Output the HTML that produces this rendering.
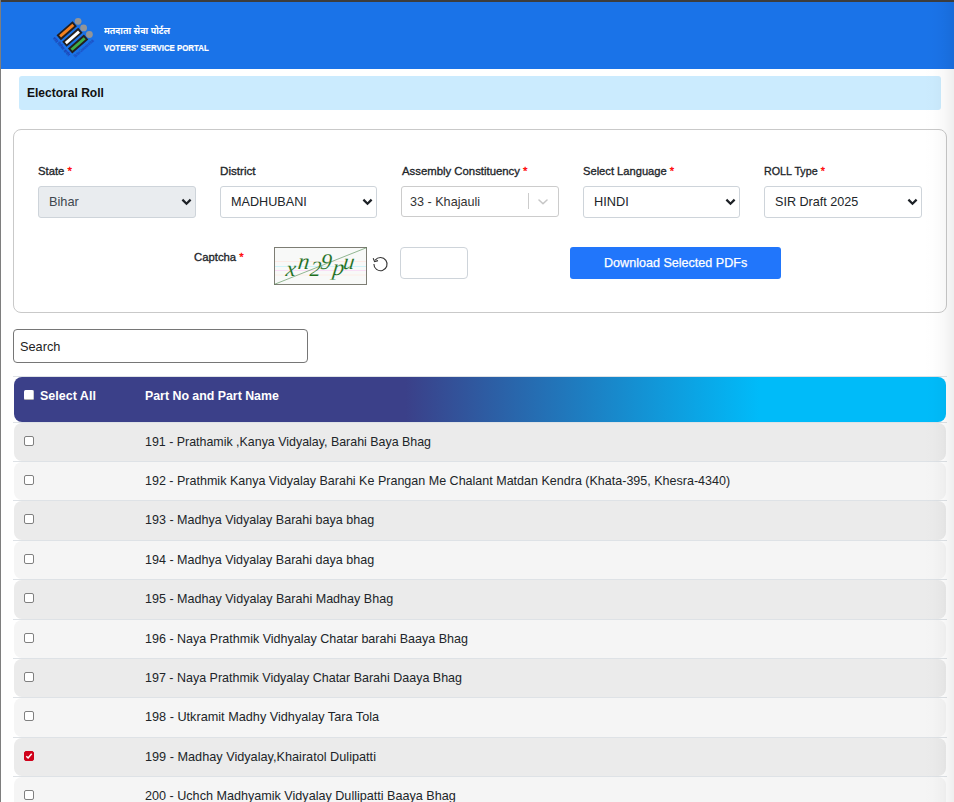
<!DOCTYPE html>
<html lang="en">
<head>
<meta charset="utf-8">
<title>Voters' Service Portal - Electoral Roll</title>
<style>
*{box-sizing:border-box;margin:0;padding:0}
html,body{width:954px;height:802px;overflow:hidden;background:#fff}
body{position:relative;font-family:"Liberation Sans","Noto Sans CJK SC",sans-serif;font-size:13px;color:#212529}
.abs{position:absolute}
.t{position:absolute;white-space:nowrap}
#topbar{left:0;top:0;width:954px;height:2px;background:#3c3c3c}
#leftedge{left:0;top:0;width:1px;height:802px;background:#7e7e7e;z-index:20}
#hdr{left:1px;top:2px;width:953px;height:67px;background:#1a73e8}
#hin{color:#fff;font-weight:700;font-size:9.5px;line-height:14px;font-family:"Liberation Sans","Noto Sans Devanagari","Noto Sans CJK SC",sans-serif}
#eng{color:#fff;font-weight:700;font-size:9px;line-height:14px;-webkit-text-stroke:0.2px #fff}
#banner{left:19px;top:76px;width:922px;height:34px;background:#cbebfe;border-radius:3px}
#ban{font-size:13.2px;line-height:18px;font-weight:700;color:#111}
#card{left:13px;top:129px;width:934px;height:184px;border:1px solid #c9c9c9;border-radius:8px;background:#fff}
.lbl{font-size:11.5px;line-height:14px;font-weight:400;color:#212529;-webkit-text-stroke:0.32px #212529}
.lbl b{color:#f00;font-weight:400;-webkit-text-stroke:0.32px #f00}
.sel{position:absolute;top:186px;height:32px;border:1px solid #ced4da;border-radius:3px;background:#fff}
.sel svg{position:absolute;right:2.6px;top:11px}
.st{font-size:13px;line-height:16px;color:#212529}
.row{position:absolute;left:13px;width:934px;height:39.2px;border-top:1px solid #dee2e6}
.row i{position:absolute;left:1px;top:0;right:1px;bottom:0;border-radius:8px;display:block}
.row.o i{background:#ebebeb}
.row.e i{background:#f5f5f5}
.row u{position:absolute;left:11px;top:13px;width:10px;height:10px;border:1px solid #808080;border-radius:2px;background:#fff;display:block;text-decoration:none}
.row u.on{background:#d0021b;border-color:#d0021b}
.rt{font-size:13px;line-height:16px;color:#212529}
.hs{font-size:13px;line-height:16px;font-weight:700;color:#fff}
</style>
</head>
<body>
<div class="abs" id="topbar"></div>
<div class="abs" id="leftedge"></div>
<div class="abs" id="hdr"></div>
<svg class="abs" style="left:45px;top:10px" width="60" height="55" viewBox="0 0 60 55">
<g transform="translate(21.7 20.7) rotate(-41)"><rect x="-9.7" y="-2.4" width="19.4" height="4.8" fill="#f58220" stroke="#231f20" stroke-width="1.85"/></g>
<g transform="translate(27.4 27.3) rotate(-41)"><rect x="-9.7" y="-2.4" width="19.4" height="4.8" fill="#ffffff" stroke="#231f20" stroke-width="1.85"/></g>
<g transform="translate(33.1 34) rotate(-41)"><rect x="-9.7" y="-2.4" width="19.4" height="4.8" fill="#3fae49" stroke="#231f20" stroke-width="1.85"/></g>
<circle cx="33.1" cy="11.3" r="3.4" fill="#939598"/>
<circle cx="38.6" cy="17.9" r="3.4" fill="#939598"/>
<circle cx="44.4" cy="24.5" r="3.4" fill="#939598"/>
<text transform="translate(7.5 28.5) rotate(49)" font-family="Liberation Sans,Noto Sans Devanagari,sans-serif" font-size="4.6" font-weight="700" fill="#1f38ac" textLength="24" lengthAdjust="spacingAndGlyphs">भारत निर्वाचन आयोग</text>
<text transform="translate(30.5 47.5) rotate(-41)" font-family="Liberation Sans,sans-serif" font-size="4.4" font-weight="700" fill="#1f38ac" textLength="25" lengthAdjust="spacingAndGlyphs">Election Commission of India</text>
</svg>
<div id="hin" class="t" style="left:104.17px;top:23.9px;transform:scaleX(0.9383);transform-origin:0 0;">मतदाता सेवा पोर्टल</div>
<div id="eng" class="t" style="left:104.42px;top:41px;transform:scaleX(0.8743);transform-origin:0 0;">VOTERS' SERVICE PORTAL</div>
<div class="abs" id="banner"></div>
<div id="ban" class="t" style="left:27.14px;top:84px;transform:scaleX(0.9120);transform-origin:0 0;">Electoral Roll</div>
<div class="abs" id="card"></div>
<div id="l1" class="t lbl" style="left:38.12px;top:164px;transform:scaleX(0.9815);transform-origin:0 0;">State <b>*</b></div>
<div id="l2" class="t lbl" style="left:219.56px;top:164px;transform:scaleX(1.0116);transform-origin:0 0;">District</div>
<div id="l3" class="t lbl" style="left:401.88px;top:164px;transform:scaleX(0.9870);transform-origin:0 0;">Assembly Constituency <b>*</b></div>
<div id="l4" class="t lbl" style="left:582.50px;top:164px;transform:scaleX(0.9700);transform-origin:0 0;">Select Language <b>*</b></div>
<div id="l5" class="t lbl" style="left:764.41px;top:164px;transform:scaleX(0.9326);transform-origin:0 0;">ROLL Type <b>*</b></div>
<div class="sel" style="left:38px;width:158px;background:#e9ecef"><svg width="11" height="8" viewBox="0 0 11 8"><path d="M1.4 1.6 L5.5 5.7 L9.6 1.6" fill="none" stroke="#1d2126" stroke-width="2.25" stroke-linecap="butt" stroke-linejoin="miter"/></svg></div>
<div class="sel" style="left:220px;width:157px"><svg width="11" height="8" viewBox="0 0 11 8"><path d="M1.4 1.6 L5.5 5.7 L9.6 1.6" fill="none" stroke="#1d2126" stroke-width="2.25" stroke-linecap="butt" stroke-linejoin="miter"/></svg></div>
<div class="sel" style="left:401px;width:158px;height:31px;border-color:#ccc"><em style="position:absolute;left:125.5px;top:6px;width:1px;height:16px;background:#ccc;display:block"></em><svg width="10" height="6" viewBox="0 0 10 6" style="right:10px;top:11.6px"><path d="M1 1 L5 4.8 L9 1" fill="none" stroke="#c6c6c6" stroke-width="1.55" stroke-linecap="round" stroke-linejoin="round"/></svg></div>
<div class="sel" style="left:583px;width:157px"><svg width="11" height="8" viewBox="0 0 11 8"><path d="M1.4 1.6 L5.5 5.7 L9.6 1.6" fill="none" stroke="#1d2126" stroke-width="2.25" stroke-linecap="butt" stroke-linejoin="miter"/></svg></div>
<div class="sel" style="left:764px;width:158px"><svg width="11" height="8" viewBox="0 0 11 8"><path d="M1.4 1.6 L5.5 5.7 L9.6 1.6" fill="none" stroke="#1d2126" stroke-width="2.25" stroke-linecap="butt" stroke-linejoin="miter"/></svg></div>
<div id="s1" class="t st" style="left:49.18px;top:194px;transform:scaleX(0.9821);transform-origin:0 0;color:#40474e;">Bihar</div>
<div id="s2" class="t st" style="left:230.70px;top:194px;transform:scaleX(0.9718);transform-origin:0 0;">MADHUBANI</div>
<div id="s3" class="t st" style="left:409.61px;top:194px;transform:scaleX(0.9694);transform-origin:0 0;color:#333;">33 - Khajauli</div>
<div id="s4" class="t st" style="left:593.52px;top:194px;transform:scaleX(0.9807);transform-origin:0 0;">HINDI</div>
<div id="s5" class="t st" style="left:775.39px;top:194px;transform:scaleX(0.9693);transform-origin:0 0;">SIR Draft 2025</div>
<div id="l6" class="t lbl" style="left:193.82px;top:250px;transform:scaleX(0.9831);transform-origin:0 0;">Captcha <b>*</b></div>
<svg class="abs" id="cap" style="left:274px;top:247px" width="93" height="38" viewBox="0 0 93 38">
<rect x="0.5" y="0.5" width="92" height="37" fill="#f8f9f8" stroke="#7d7d74" stroke-width="1"/>
<line x1="1" y1="14.5" x2="92" y2="14.5" stroke="#fdebe6" stroke-width="1"/>
<line x1="1" y1="19.5" x2="92" y2="19.5" stroke="#cff4f8" stroke-width="1"/>
<line x1="1" y1="23.5" x2="92" y2="23.5" stroke="#f9def6" stroke-width="1"/>
<line x1="1" y1="28" x2="92" y2="28" stroke="#fdeee6" stroke-width="1"/>
<g font-family="Liberation Serif,serif" font-style="italic" fill="#1c6e1c" stroke="#f8f9f8" stroke-width="0.12">
<text transform="translate(11.3 28.5) skewX(-7)" font-size="22.5">x</text><text transform="translate(23.2 21.7) skewX(-7)" font-size="23">n</text><text transform="translate(35.2 28.5) skewX(-7)" font-size="22">2</text><text transform="translate(45.8 21.7) skewX(-7)" font-size="22.5">9</text><text transform="translate(58 28) skewX(-7)" font-size="23">p</text><text transform="translate(68.5 22.2) skewX(-7)" font-size="22.5">u</text>
</g>
<line x1="0.5" y1="37.3" x2="92.5" y2="0.7" stroke="#3d7f3d" stroke-width="0.55"/>
</svg>
<svg class="abs" style="left:371px;top:255px" width="18" height="18" viewBox="0 0 18 18"><path d="M4.2 5.2 A6.6 6.6 0 1 1 2.9 9" fill="none" stroke="#333" stroke-width="1.1"/><path d="M2.2 3.2 L3.6 6.6 L7 5.6" fill="none" stroke="#333" stroke-width="1.1"/></svg>
<div class="abs" style="left:400px;top:247px;width:68px;height:32px;border:1px solid #ced4da;border-radius:4px;background:#fff"></div>
<div class="abs" style="left:570px;top:247px;width:211px;height:32px;border-radius:3px;background:#2176fb"></div>
<div id="btn" class="t" style="left:604.43px;top:255px;transform:scaleX(0.9670);transform-origin:0 0;color:#fff;font-size:13px;line-height:16px;-webkit-text-stroke:0.25px #fff;">Download Selected PDFs</div>
<div class="abs" style="left:13px;top:329px;width:295px;height:34px;border:1px solid #767676;border-radius:4px;background:#fff"></div>
<div id="srch" class="t" style="left:19.70px;top:338.6px;transform:scaleX(0.9801);transform-origin:0 0;color:#222;font-size:13px;line-height:16px;">Search</div>
<div class="abs" style="left:13px;top:376px;width:934px;height:1px;background:#dee2e6"></div>
<div class="abs" id="th" style="left:14px;top:377px;width:932px;height:45px;border-radius:8px;background:linear-gradient(90deg,#3b4089 42%,#00bbf9 80%)">
<u style="position:absolute;left:10px;top:13px;width:9.8px;height:10px;background:#fff;border-radius:1.5px;display:block;border-bottom:1px solid #b0b0b0;border-right:1px solid #ccc"></u>
</div>
<div id="h1" class="t hs" style="left:39.69px;top:387.7px;transform:scaleX(0.9623);transform-origin:0 0;">Select All</div>
<div id="h2" class="t hs" style="left:144.91px;top:387.7px;transform:scaleX(0.9501);transform-origin:0 0;">Part No and Part Name</div>
<div class="row o" style="top:422px;height:39px"><i></i><u></u></div>
<div id="r0" class="t rt" style="left:145.00px;top:433.6px;transform:scaleX(0.9552);transform-origin:0 0;">191 - Prathamik ,Kanya Vidyalay, Barahi Baya Bhag</div>
<div class="row e" style="top:461px;height:39px"><i></i><u></u></div>
<div id="r1" class="t rt" style="left:145.00px;top:472.6px;transform:scaleX(0.9631);transform-origin:0 0;">192 - Prathmik Kanya Vidyalay Barahi Ke Prangan Me Chalant Matdan Kendra (Khata-395, Khesra-4340)</div>
<div class="row o" style="top:500px;height:40px"><i></i><u></u></div>
<div id="r2" class="t rt" style="left:145.00px;top:511.6px;transform:scaleX(0.9646);transform-origin:0 0;">193 - Madhya Vidyalay Barahi baya bhag</div>
<div class="row e" style="top:540px;height:39px"><i></i><u></u></div>
<div id="r3" class="t rt" style="left:145.00px;top:551.6px;transform:scaleX(0.9646);transform-origin:0 0;">194 - Madhya Vidyalay Barahi daya bhag</div>
<div class="row o" style="top:579px;height:40px"><i></i><u></u></div>
<div id="r4" class="t rt" style="left:145.00px;top:590.6px;transform:scaleX(0.9653);transform-origin:0 0;">195 - Madhay Vidyalay Barahi Madhay Bhag</div>
<div class="row e" style="top:619px;height:39px"><i></i><u></u></div>
<div id="r5" class="t rt" style="left:145.00px;top:630.6px;transform:scaleX(0.9640);transform-origin:0 0;">196 - Naya Prathmik Vidhyalay Chatar barahi Baaya Bhag</div>
<div class="row o" style="top:658px;height:39px"><i></i><u></u></div>
<div id="r6" class="t rt" style="left:145.00px;top:669.6px;transform:scaleX(0.9606);transform-origin:0 0;">197 - Naya Prathmik Vidyalay Chatar Barahi Daaya Bhag</div>
<div class="row e" style="top:697px;height:40px"><i></i><u></u></div>
<div id="r7" class="t rt" style="left:145.00px;top:708.6px;transform:scaleX(0.9757);transform-origin:0 0;">198 - Utkramit Madhy Vidhyalay Tara Tola</div>
<div class="row o" style="top:737px;height:39px"><i></i><u class="on"><svg width="8" height="8" viewBox="0 0 8 8" style="position:absolute;left:0;top:0"><path d="M1.3 4.2 L3.1 6 L6.7 1.8" fill="none" stroke="#fff" stroke-width="1.5"/></svg></u></div>
<div id="r8" class="t rt" style="left:145.00px;top:748.6px;transform:scaleX(0.9764);transform-origin:0 0;">199 - Madhay Vidyalay,Khairatol Dulipatti</div>
<div class="row e" style="top:776px;height:40px"><i></i><u></u></div>
<div id="r9" class="t rt" style="left:145.13px;top:787.6px;transform:scaleX(0.9693);transform-origin:0 0;">200 - Uchch Madhyamik Vidyalay Dullipatti Baaya Bhag</div>
<div class="abs" style="left:920px;top:2px;width:34px;height:800px;z-index:30;pointer-events:none;background:linear-gradient(90deg,rgba(0,0,0,0) 0%,rgba(0,0,0,0.005) 35%,rgba(0,0,0,0.022) 68%,rgba(0,0,0,0.065) 100%)"></div>
</body>
</html>
